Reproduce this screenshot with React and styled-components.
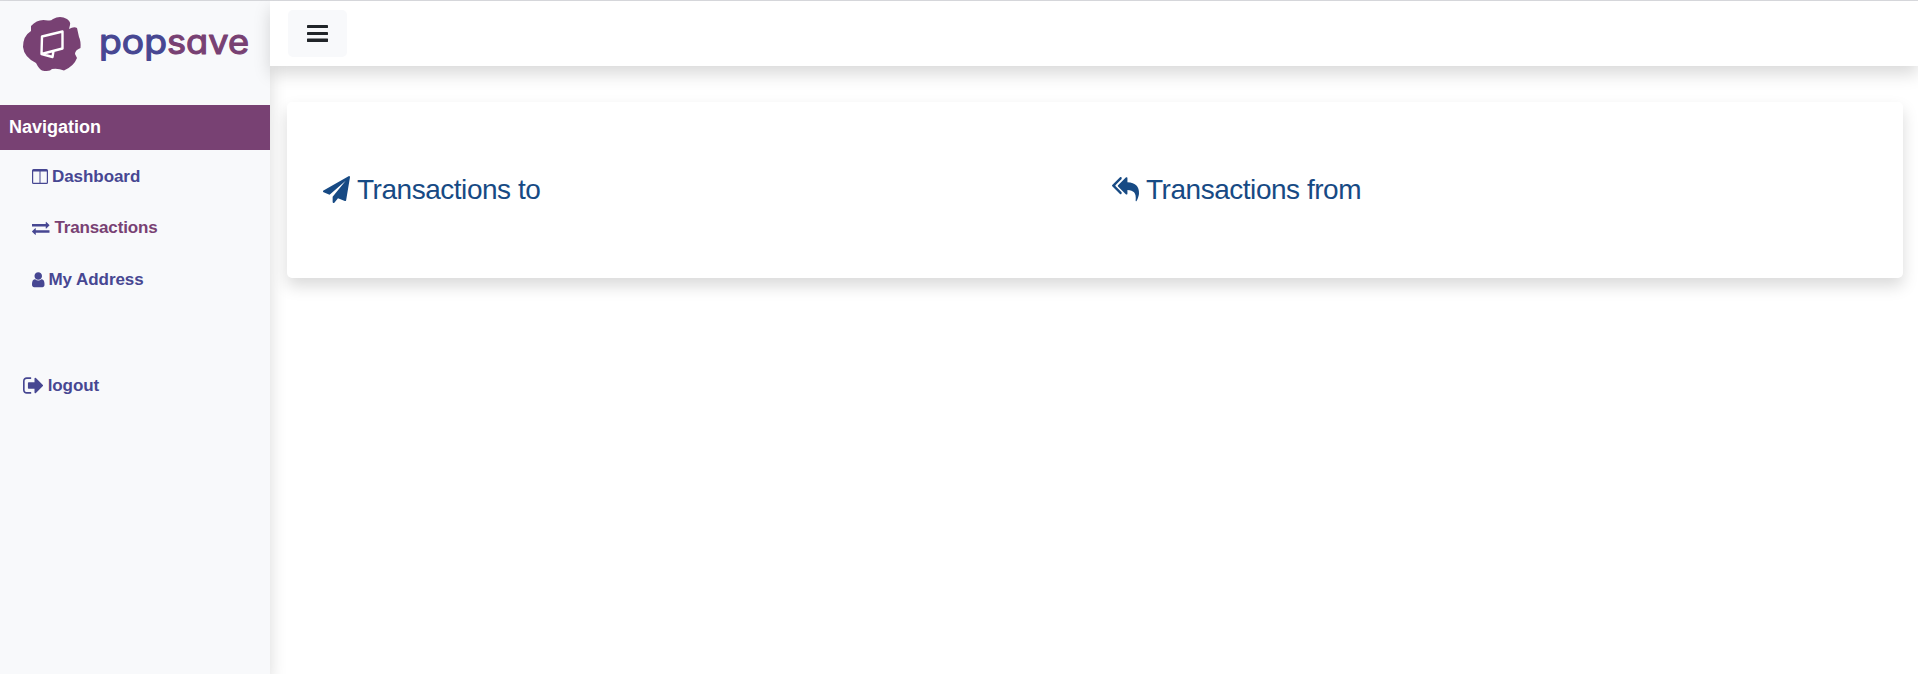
import React from "react";
import styled, { createGlobalStyle } from "styled-components";

const GlobalStyle = createGlobalStyle`
  *, *::before, *::after { box-sizing: border-box; }
  body {
    margin: 0;
    background: #fff;
    color: #212529;
    font-family: "Liberation Sans", Arial, sans-serif;
    font-size: 16px;
    line-height: 1.5;
    overflow: hidden;
  }
`;

const SHADOW = "0 8px 16px rgba(0, 0, 0, 0.15)";

const Page = styled.div`
  display: flex;
  height: 674px;
  border-top: 1px solid #dadbdf;
`;

const Sidebar = styled.aside`
  width: 270px;
  flex: none;
  background: #f8f9fb;
  box-shadow: ${SHADOW};
`;

const Brand = styled.div`
  height: 104px;
  padding: 15px 0 0 22px;
`;

const BrandArt = styled.svg`
  display: block;
  overflow: visible;
`;

const Wordmark = styled.g`
  font-family: Inter, sans-serif;
  font-size: 34px;
  font-weight: 400;
  font-feature-settings: "cv11";
  stroke-width: 1.1;
  stroke-linejoin: round;
`;

const NavHeading = styled.h2`
  margin: 0;
  height: 45px;
  padding: 0 9px;
  background: #784173;
  color: #fff;
  font-size: 18px;
  font-weight: 700;
  line-height: 44px;
`;

const NavList = styled.nav`
  display: flex;
  flex-direction: column;
  padding: 1px 0 0 32px;
`;

const NavLink = styled.a`
  display: flex;
  align-items: center;
  gap: ${(p) => p.$gap || 5}px;
  height: 51.5px;
  padding-bottom: ${(p) => (p.$active ? 1.5 : 0)}px;
  color: ${(p) => (p.$active ? "#784173" : "#474792")};
  font-size: 17px;
  font-weight: 700;
  letter-spacing: ${(p) => (p.$active ? -0.16 : -0.06)}px;
  text-decoration: none;
  white-space: nowrap;
`;

const Logout = styled(NavLink)`
  margin: 54px 0 0 22.5px;
`;

const Glyph = styled.svg`
  flex: none;
  fill: ${(p) => p.$color || "currentColor"};
`;

const Main = styled.main`
  flex: 1;
  min-width: 0;
`;

const TopBar = styled.header`
  position: relative;
  display: flex;
  align-items: center;
  height: 65px;
  padding-left: 18px;
  background: #fff;
  box-shadow: ${SHADOW};
`;

const MenuButton = styled.button`
  display: grid;
  place-items: center;
  width: 59px;
  height: 47px;
  padding: 0;
  border: 0;
  border-radius: 5px;
  background: #f8f9fb;
  color: #212529;
`;

const Card = styled.section`
  position: relative;
  display: grid;
  grid-template-columns: 1fr 1fr;
  height: 176px;
  margin: 36px 15px 0 17px;
  padding: 0 20px 0 18px;
  border-radius: 5px;
  background: #fff;
  box-shadow: ${SHADOW};
`;

const CardTitle = styled.h3`
  display: flex;
  align-items: center;
  gap: 7px;
  height: 42px;
  margin: 67px 0 0 18px;
  color: #174a84;
  font-size: 28px;
  font-weight: 400;
  letter-spacing: -0.47px;
  white-space: nowrap;

  ${Glyph} {
    margin-bottom: 2px;
  }
`;

const ICONS = {
  exchange: { width: 1792, x: 0, d: "M1792 1184v192q0 13-9.5 22.5t-22.5 9.5h-1376v192q0 13-9.5 22.5t-22.5 9.5q-12 0-24-10l-319-320q-9-9-9-22 0-14 9-23l320-320q9-9 23-9 13 0 22.5 9.5t9.5 22.5v192h1376q13 0 22.5 9.5t9.5 22.5zm0-544q0 14-9 23l-320 320q-9 9-23 9-13 0-22.5-9.5t-9.5-22.5v-192h-1376q-13 0-22.5-9.5t-9.5-22.5v-192q0-13 9.5-22.5t22.5-9.5h1376v-192q0-14 9-23t23-9q12 0 24 10l319 319q9 9 9 23z" },
  user: { width: 1280, x: 256, d: "M1536 1399q0 109-62.5 187t-150.5 78h-854q-88 0-150.5-78t-62.5-187q0-85 8.5-160.5t31.5-152 58.5-131 94-89 134.5-34.5q131 128 313 128t313-128q76 0 134.5 34.5t94 89 58.5 131 31.5 152 8.5 160.5zm-256-887q0 159-112.5 271.5t-271.5 112.5-271.5-112.5-112.5-271.5 112.5-271.5 271.5-112.5 271.5 112.5 112.5 271.5z" },
  signOut: { width: 1568, x: 64, d: "M704 1440q0 4 1 20t.5 26.5-3 23.5-10 19.5-20.5 6.5h-320q-119 0-203.5-84.5t-84.5-203.5v-704q0-119 84.5-203.5t203.5-84.5h320q13 0 22.5 9.5t9.5 22.5q0 4 1 20t.5 26.5-3 23.5-10 19.5-20.5 6.5h-320q-66 0-113 47t-47 113v704q0 66 47 113t113 47h312l11.5 1 11.5 3 8 5.5 7 9 2 13.5zm928-544q0 26-19 45l-544 544q-19 19-45 19t-45-19-19-45v-288h-448q-26 0-45-19t-19-45v-384q0-26 19-45t45-19h448v-288q0-26 19-45t45-19 45 19l544 544q19 19 19 45z" },
  plane: { width: 1792, x: 0, d: "M1764 11q33 24 27 64l-256 1536q-5 29-32 45-14 8-31 8-11 0-24-5l-453-185-242 295q-18 23-49 23-13 0-22-4-19-7-30.5-23.5t-11.5-36.5v-349l864-1059-1069 925-395-162q-37-14-40-55-2-40 32-59l1664-960q15-9 32-9 20 0 36 11z" },
  replyAll: { width: 1792, x: 0, d: "M640 1082v70q0 42-39 59-13 5-25 5-27 0-45-19l-512-512q-19-19-19-45t19-45l512-512q29-31 70-14 39 17 39 59v69l-397 398q-19 19-19 45t19 45zm1152 58q0 58-17 133.5t-38.5 138-48 125-40.5 90.5l-20 40q-8 17-28 17-6 0-9-1-25-8-23-34 43-400-106-565-64-71-170.5-110.5t-267.5-52.5v251q0 42-39 59-13 5-25 5-27 0-45-19l-512-512q-19-19-19-45t19-45l512-512q29-31 70-14 39 17 39 59v262q411 28 599 221 169 173 169 509z" },
};

function Icon({ name, size, color }) {
  const { width, x, d } = ICONS[name];
  return (
    <Glyph
      $color={color}
      width={(width / 1792) * size}
      height={size}
      viewBox={`${x} 0 ${width} 1792`}
      aria-hidden="true"
    >
      <path d={d} />
    </Glyph>
  );
}

function ColumnsIcon() {
  return (
    <Glyph width="16" height="15" viewBox="0 0 16 15" aria-hidden="true">
      <path fillRule="evenodd" d="M1.500 0H14.500Q16 0 16 1.500V13.500Q16 15 14.500 15H1.500Q0 15 0 13.500V1.500Q0 0 1.500 0ZM1.200 2.500V13.800H7.500V2.500ZM8.500 2.500V13.800H14.800V2.500Z" />
    </Glyph>
  );
}

function BarsIcon() {
  return (
    <Glyph width="21" height="17" viewBox="0 0 21 17" aria-hidden="true">
      <rect width="21" height="3" rx="0.4" />
      <rect y="7" width="21" height="3" rx="0.4" />
      <rect y="13.600" width="21" height="3.400" rx="0.4" />
    </Glyph>
  );
}

function Logo() {
  return (
    <BrandArt width="230" height="58" viewBox="22 16 230 58" role="img" aria-label="popsave">
      <path
        fill="#784173"
        d="M31 26Q38 18 48 20.500Q51 21 53 19Q60 15 67 19Q71 22 70 25L69 29Q74 26 77 28L79 37Q81 41 80.500 48Q75 50 75 54L77 58Q74 66 64 70.500Q58 68 52 69Q50 72 42 70.500Q39 69 36 63Q24 57 23 47Q23 36 31 31Z"
      />
      <path
        fill="none"
        stroke="#fff"
        strokeWidth="2.400"
        strokeLinejoin="round"
        d="M42 36.500L62.500 31.500V48.500L41.500 54ZM41.500 54L52.500 57L53.500 51"
      />
      <Wordmark>
        <text x="99" y="54" fill="#474792" stroke="#474792" textLength="68" lengthAdjust="spacingAndGlyphs">pop</text>
        <text x="167" y="54" fill="#784173" stroke="#784173" textLength="82" lengthAdjust="spacingAndGlyphs">save</text>
      </Wordmark>
    </BrandArt>
  );
}

export default function App() {
  return (
    <>
      <GlobalStyle />
      <Page>
        <Sidebar>
          <Brand>
            <Logo />
          </Brand>
          <NavHeading>Navigation</NavHeading>
          <NavList>
            <NavLink $gap={4}><ColumnsIcon />Dashboard</NavLink>
            <NavLink $active><Icon name="exchange" size={17.5} color="#474792" />Transactions</NavLink>
            <NavLink $gap={4}><Icon name="user" size={17.5} />My Address</NavLink>
          </NavList>
          <Logout><Icon name="signOut" size={23} />logout</Logout>
        </Sidebar>
        <Main>
          <TopBar>
            <MenuButton aria-label="Menu"><BarsIcon /></MenuButton>
          </TopBar>
          <Card>
            <CardTitle><Icon name="plane" size={27} />Transactions to</CardTitle>
            <CardTitle><Icon name="replyAll" size={27} />Transactions from</CardTitle>
          </Card>
        </Main>
      </Page>
    </>
  );
}
